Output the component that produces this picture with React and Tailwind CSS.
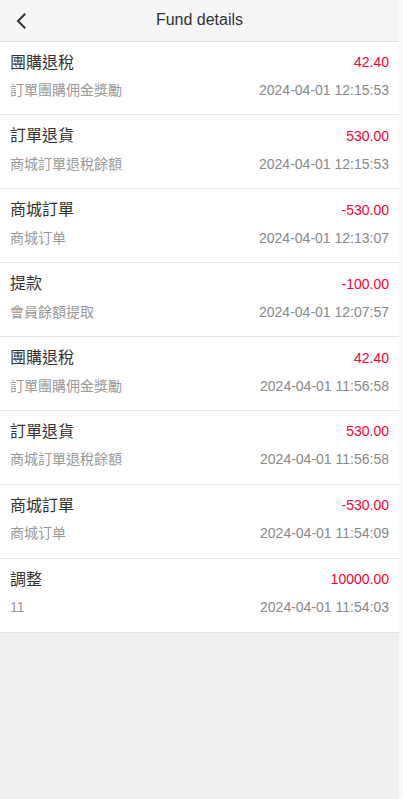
const records = [
  { title: "團購退稅", amount: "42.40", desc: "訂單團購佣金獎勵", time: "2024-04-01 12:15:53" },
  { title: "訂單退貨", amount: "530.00", desc: "商城訂單退稅餘額", time: "2024-04-01 12:15:53" },
  { title: "商城訂單", amount: "-530.00", desc: "商城订单", time: "2024-04-01 12:13:07" },
  { title: "提款", amount: "-100.00", desc: "會員餘額提取", time: "2024-04-01 12:07:57" },
  { title: "團購退稅", amount: "42.40", desc: "訂單團購佣金獎勵", time: "2024-04-01 11:56:58" },
  { title: "訂單退貨", amount: "530.00", desc: "商城訂單退稅餘額", time: "2024-04-01 11:56:58" },
  { title: "商城訂單", amount: "-530.00", desc: "商城订单", time: "2024-04-01 11:54:09" },
  { title: "調整", amount: "10000.00", desc: "11", time: "2024-04-01 11:54:03" },
];

export default function App() {
  return (
    <div
      className="flex min-h-[799px] w-[403px] bg-[#fafafa]"
      style={{ fontFamily: '"Liberation Sans", "Noto Sans CJK TC", sans-serif' }}
    >
      <div className="flex w-[399px] flex-col bg-[#efefef]">
        <div className="relative flex h-[41.5px] items-center justify-center border-b border-[#e2e2e2] bg-[#f5f5f5]">
          <button className="absolute left-[14px] top-[12px] flex h-[18px] w-[14px] items-center justify-center">
            <svg width="10" height="16" viewBox="0 0 10 16" fill="none">
              <path d="M8.5 1.5 2 8l6.5 6.5" stroke="#333" strokeWidth="2" strokeLinecap="square" />
            </svg>
          </button>
          <h1 className="text-[16px] text-[#333]">Fund details</h1>
        </div>

        <div className="flex flex-col bg-white">
          {records.map((r, i) => (
            <div key={i} className="h-[73.875px] border-b border-[#e4e4e4] px-[10px] pt-[10px]">
              <div className="flex h-[22px] items-center justify-between">
                <span className="text-[16px] text-[#333]">{r.title}</span>
                <span className="text-[14px] text-[#ff0033]">{r.amount}</span>
              </div>
              <div className="mt-[7px] flex h-[20px] items-center justify-between">
                <span className="text-[14px] text-[#999]">{r.desc}</span>
                <span className="text-[14px] text-[#888]">{r.time}</span>
              </div>
            </div>
          ))}
        </div>
      </div>
    </div>
  );
}
